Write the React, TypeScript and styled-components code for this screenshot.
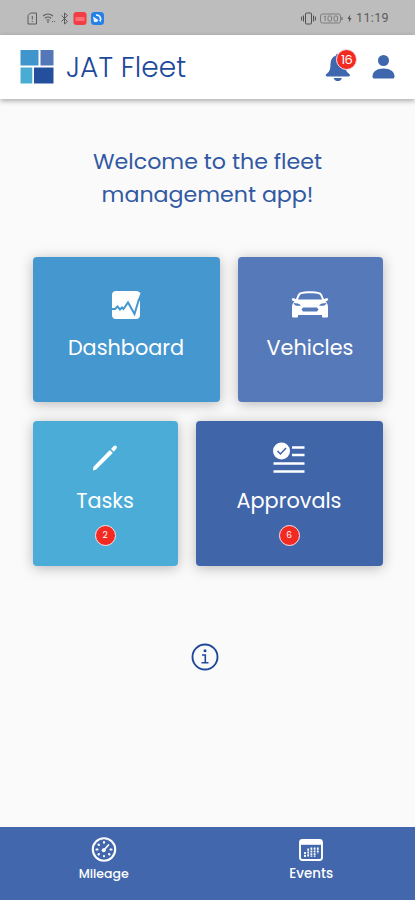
import React from "react";
import styled, { createGlobalStyle } from "styled-components";

const GlobalStyle = createGlobalStyle`
  *, *::before, *::after { box-sizing: border-box; }
  body { margin: 0; background: #fafafa; font-family: Poppins, Inter, sans-serif; }
  svg { display: block; flex: none; }
`;

const Screen = styled.div`
  width: 415px;
  height: 900px;
  display: flex;
  flex-direction: column;
  background: #fafafa;
  overflow: hidden;
`;

const StatusBar = styled.div`
  height: 35px;
  flex: none;
  display: flex;
  align-items: center;
  justify-content: space-between;
  padding: 1px 26px 0 27px;
  background: #bdbdbd;
  color: #5c5c5c;
`;

const StatusGroup = styled.div<{ $gap: number }>`
  display: flex;
  align-items: center;
  gap: ${(p) => p.$gap}px;
`;

const Clock = styled.span`
  font: 400 12.5px/16px Roboto, sans-serif;
  letter-spacing: 0.35px;
`;

const Header = styled.header`
  height: 64px;
  flex: none;
  display: flex;
  align-items: center;
  padding: 0 20px;
  background: #fff;
  box-shadow: 0 2px 5px rgba(0, 0, 0, 0.32);
`;

const Brand = styled.h1`
  margin: 0 auto 0 12px;
  padding-top: 1px;
  font-size: 28px;
  font-weight: 300;
  line-height: 36px;
  letter-spacing: 0.1px;
  color: #20499b;
`;

const BellButton = styled.div`
  position: relative;
  margin-right: 21px;
`;

const Badge = styled.span<{ $size: number; $font: number }>`
  width: ${(p) => p.$size}px;
  height: ${(p) => p.$size}px;
  display: flex;
  align-items: center;
  justify-content: center;
  border-radius: 50%;
  border: 1.5px solid #f6e5ea;
  background: #f22a22;
  color: #fff;
  font-size: ${(p) => p.$font}px;
  line-height: 1;
`;

const BellBadge = styled(Badge)`
  position: absolute;
  top: -4px;
  left: 11px;
  border-width: 1px;
  letter-spacing: -0.6px;
`;

const Main = styled.main`
  flex: 1;
  display: flex;
  flex-direction: column;
  align-items: center;
`;

const Welcome = styled.h2`
  margin: 46px 0 0;
  width: 270px;
  text-align: center;
  font-size: 22.15px;
  font-weight: 400;
  line-height: 33px;
  color: #3159a3;
`;

const Tiles = styled.div`
  width: 350px;
  margin-top: 46px;
  display: flex;
  flex-direction: column;
  gap: 19px;
`;

const TileRow = styled.div<{ $columns: string }>`
  display: grid;
  grid-template-columns: ${(p) => p.$columns};
  gap: 18px;
`;

const Tile = styled.div<{ $color: string; $top: number }>`
  height: 145px;
  padding-top: ${(p) => p.$top}px;
  display: flex;
  flex-direction: column;
  align-items: center;
  border-radius: 4px;
  background: ${(p) => p.$color};
  box-shadow: 0 2px 13px rgba(0, 0, 0, 0.27);
  color: #fff;
`;

const TileIcon = styled.div`
  height: 32px;
  display: flex;
  align-items: center;
`;

const TileLabel = styled.span`
  margin: 12px 0 9px;
  font-size: 20.8px;
  line-height: 30px;
`;

const Info = styled.div`
  margin: 77px 5px 0 0;
`;

const BottomNav = styled.nav`
  height: 73px;
  flex: none;
  display: grid;
  grid-template-columns: 1fr 1fr;
  background: #4267ac;
  color: #fff;
`;

const NavItem = styled.div`
  padding-top: 10px;
  display: flex;
  flex-direction: column;
  align-items: center;
`;

const NavLabel = styled.span<{ $size: number }>`
  margin-top: 1px;
  font-size: ${(p) => p.$size}px;
  font-weight: 500;
  line-height: 20px;
`;

const SimIcon = () => (
  <svg width="11" height="13" viewBox="0 0 11 13" fill="none" stroke="#5c5c5c">
    <path d="M1 3.5 3.5 1H9.5V12H1Z" />
    <path d="M5.3 4v3.5M5.3 9v1" />
  </svg>
);
const WifiIcon = () => (
  <svg width="14" height="12" viewBox="0 0 14 12" fill="none" stroke="#5c5c5c" strokeWidth="1.1">
    <path d="M1 4Q6 0 11 4M2.8 6.2Q6 3.8 9.2 6.2M4.5 8.3Q6 7.2 7.5 8.3" />
    <path d="M6 9v2M10 9.5h1M12 9.5h1" />
  </svg>
);
const BluetoothIcon = () => (
  <svg width="9" height="13" viewBox="0 0 9 13" fill="none" stroke="#5c5c5c">
    <path d="m1.5 3.5 6 6-3 2.5V1l3 2.5-6 6" />
  </svg>
);
const RedAppIcon = () => (
  <svg width="14" height="13" viewBox="0 0 14 13">
    <rect x=".5" width="13" height="13" rx="3" fill="#f13d43" />
    <path d="M2.5 6h9M2.5 8h9" stroke="#ffa5a7" />
  </svg>
);
const BlueAppIcon = () => (
  <svg width="13" height="13" viewBox="0 0 13 13">
    <rect width="13" height="13" rx="3.5" fill="#247fe8" />
    <path d="M5 3.2c3.5-.6 6 3 4 6.3" fill="none" stroke="#e5f3ff" strokeWidth="1.8" />
    <path d="M2 4.5 7.5 8 6 10H3Z" fill="#e5f3ff" />
  </svg>
);
const VibrateIcon = () => (
  <svg width="15" height="13" viewBox="0 0 15 13" fill="none" stroke="#505050">
    <rect x="4.5" y="1" width="6" height="11" rx="1" />
    <path d="M2.5 3.5v6M12.5 3.5v6M.6 4.5v4M14.4 4.5v4" />
  </svg>
);
const BatteryIcon = () => (
  <svg width="23" height="11" viewBox="0 0 23 11" fill="none" stroke="#777" strokeWidth=".9">
    <rect x=".5" y="1" width="20" height="9" rx="2" />
    <path d="M22 4v3" stroke="#555" />
    <path d="m4 4 1.2-1v5" />
    <rect x="8" y="3" width="3.5" height="5" rx="1" />
    <rect x="14" y="3" width="3.5" height="5" rx="1" />
  </svg>
);
const BoltIcon = () => (
  <svg width="5" height="9" viewBox="0 0 5 9" fill="#505050">
    <path d="M3.2.5.5 5h1.7L1.8 8.5 4.5 4H2.8Z" />
  </svg>
);

const Logo = () => (
  <svg width="34" height="34" viewBox="0 0 34 34">
    <path fill="#4096cc" d="M.5 0h18v15.5H.5Z" />
    <path fill="#5577b7" d="M20.5 0H33.5v15.5H20.5Z" />
    <path fill="#4bacd3" d="M.5 17.5h11.8V33.5H.5Z" />
    <path fill="#234f9d" d="M14 17.5h19.5v16H14Z" />
  </svg>
);
const BellIcon = () => (
  <svg width="26" height="29" viewBox="0 0 26 29" fill="#3e67ad">
    <path d="M12.8.8c-1.3 0-1.8.8-2 2-3.5 1-5.2 4-5.3 8.2-.1 5-.7 7-2.6 8.7C1.5 21 .7 21.6.7 22.3c0 .8.6 1.1 1.4 1.1h21.5c.9 0 1.4-.4 1.4-1.1 0-.8-.8-1.3-2.2-2.6-2-1.8-2.5-4.2-2.6-8.7-.1-4.2-1.9-7.2-5.3-8.2-.2-1.2-.8-2-2.1-2Z" />
    <path d="M8.8 25h8c-.2 1.9-2 3.1-4 3.1s-3.8-1.2-4-3.1Z" />
  </svg>
);
const PersonIcon = () => (
  <svg width="23" height="26" viewBox="0 0 23 26" fill="#3e67ad">
    <circle cx="11.5" cy="6.5" r="5.5" />
    <path d="M.5 22.5c0-5 4.3-8 11-8s11 3 11 8c0 1.5-.8 2-2 2h-18c-1.2 0-2-.5-2-2Z" />
  </svg>
);
const ChartIcon = () => (
  <svg width="31" height="30" viewBox="0 0 31 30">
    <rect x="1" y="1" width="28" height="28" rx="4" fill="#fff" />
    <path d="M0 19h4l2.500-2.500L9 19.500l2-2 1.500 1.500 4.500-6.500 6.500 11.500L29.500 4" fill="none" stroke="#4597d0" strokeWidth="2" />
    <path d="m27.5 11 1.500-6L31 0v11Z" fill="#4597d0" />
    <path d="M26.800 8.500 29 2.500" stroke="#fff" strokeWidth="1.200" />
  </svg>
);
const CarIcon = () => (
  <svg width="38" height="30" viewBox="0 0 38 30">
    <path fill="#fff" fillRule="evenodd" d="M9 2.500c5-1.700 15-1.700 20 0 1.500.5 2.400 2.300 4 6.800 1.500-1.200 4.200-1.400 4.200.1 0 1-1.500 1.700-3 1.900 2.200 1.700 2.800 3.700 2.800 6.200v8.700c0 .8-.5 1.300-1.500 1.300h-3c-1 0-1.500-.5-1.500-1.500V25H7v1c0 1-.5 1.500-1.500 1.500h-3C1.500 27.500 1 27 1 26.200v-8.700c0-2.500.6-4.500 2.800-6.200-1.500-.2-3-.9-3-1.900 0-1.500 2.700-1.300 4.200-.1 1.600-4.500 2.500-6.300 4-6.800ZM7 9.500h24c-1.200-3.500-1.900-4.900-3-5.300-4-1.200-14-1.200-18 0-1.100.4-1.800 1.800-3 5.300Z" />
    <path fill="#567ab9" d="M2.500 13c3 0 6 .7 7.500 2.500-3 .8-7 .3-7.500-2.500ZM35.500 13c-3 0-6 .7-7.500 2.500 3 .8 7 .3 7.500-2.500ZM12 17.500h14l1.500 2-1.500 2H12l-1.500-2Z" />
  </svg>
);
const PencilIcon = () => (
  <svg width="28" height="28" viewBox="0 0 28 28" fill="#fff">
    <path d="m2 26.500.5-3.700L18.800 6l3 3L5.200 25.600Z" />
    <path d="m20 4.900 2.500-2.700c1-1 2.300-.8 2.900-.2.700.7.700 1.900-.1 2.800l-2.500 2.900Z" />
  </svg>
);
const ChecklistIcon = () => (
  <svg width="32" height="32" viewBox="0 0 32 32">
    <circle cx="8.5" cy="9" r="8.5" fill="#fff" />
    <path d="m4.500 9 3 3 5.500-6" fill="none" stroke="#4065a9" strokeWidth="1.5" />
    <path d="M19 5.500h12.500M19 13h12.500M.5 21.500h31M.5 29.500h31" stroke="#fff" strokeWidth="2.4" />
  </svg>
);
const InfoIcon = () => (
  <svg width="28" height="28" viewBox="0 0 28 28" fill="none" stroke="#20499b">
    <circle cx="14" cy="14" r="12.5" strokeWidth="1.9" />
    <path d="M11 12h3.300v7.800M10.500 19.800h7" strokeWidth="1.6" />
    <circle cx="14" cy="7.8" r="1.5" fill="#20499b" stroke="none" />
  </svg>
);
const GaugeIcon = () => (
  <svg width="26" height="26" viewBox="0 0 26 26" fill="none" stroke="#fff">
    <circle cx="13" cy="12.5" r="11.2" strokeWidth="2.1" />
    <g strokeWidth="2.1" strokeLinecap="round">
      <path d="M13 5v.8M7.500 7.500l.5.500M5.500 12.500h1M7.500 17.500l.5-.5M18.500 17.500l-.5-.5M20.500 12.500h-1M13 19v.3" />
      <path d="m13 13 4.500-5" strokeWidth="1.7" />
    </g>
    <circle cx="12.7" cy="13.3" r="2" fill="#fff" stroke="none" />
  </svg>
);
const CalendarIcon = () => (
  <svg width="26" height="26" viewBox="0 0 26 26" fill="none" stroke="#fff">
    <rect x="2" y="3" width="22" height="20" rx="2.5" strokeWidth="1.9" />
    <path d="M2 5.800h22" strokeWidth="4" />
    <path d="M7 15v5M10.200 11.500v8.500M13.400 10.500v9.500M16.600 10.500v9.500M19.800 10.500v6" strokeWidth="1.8" strokeDasharray="2.2 .7" />
  </svg>
);

export default function App() {
  return (
    <>
      <GlobalStyle />
      <Screen>
        <StatusBar>
          <StatusGroup $gap={4}>
            <SimIcon />
            <WifiIcon />
            <BluetoothIcon />
            <RedAppIcon />
            <BlueAppIcon />
          </StatusGroup>
          <StatusGroup $gap={4}>
            <VibrateIcon />
            <BatteryIcon />
            <BoltIcon />
            <Clock>11:19</Clock>
          </StatusGroup>
        </StatusBar>
        <Header>
          <Logo />
          <Brand>JAT Fleet</Brand>
          <BellButton>
            <BellIcon />
            <BellBadge $size={21} $font={13}>16</BellBadge>
          </BellButton>
          <PersonIcon />
        </Header>
        <Main>
          <Welcome>Welcome to the fleet management app!</Welcome>
          <Tiles>
            <TileRow $columns="187px 145px">
              <Tile $color="#4597d0" $top={32}>
                <TileIcon><ChartIcon /></TileIcon>
                <TileLabel>Dashboard</TileLabel>
              </Tile>
              <Tile $color="#567ab9" $top={32}>
                <TileIcon><CarIcon /></TileIcon>
                <TileLabel>Vehicles</TileLabel>
              </Tile>
            </TileRow>
            <TileRow $columns="145px 187px">
              <Tile $color="#4badd7" $top={21}>
                <TileIcon><PencilIcon /></TileIcon>
                <TileLabel>Tasks</TileLabel>
                <Badge $size={21} $font={9}>2</Badge>
              </Tile>
              <Tile $color="#4065a9" $top={21}>
                <TileIcon><ChecklistIcon /></TileIcon>
                <TileLabel>Approvals</TileLabel>
                <Badge $size={21} $font={9}>6</Badge>
              </Tile>
            </TileRow>
          </Tiles>
          <Info>
            <InfoIcon />
          </Info>
        </Main>
        <BottomNav>
          <NavItem>
            <GaugeIcon />
            <NavLabel $size={12.5}>Mileage</NavLabel>
          </NavItem>
          <NavItem>
            <CalendarIcon />
            <NavLabel $size={13.4}>Events</NavLabel>
          </NavItem>
        </BottomNav>
      </Screen>
    </>
  );
}
